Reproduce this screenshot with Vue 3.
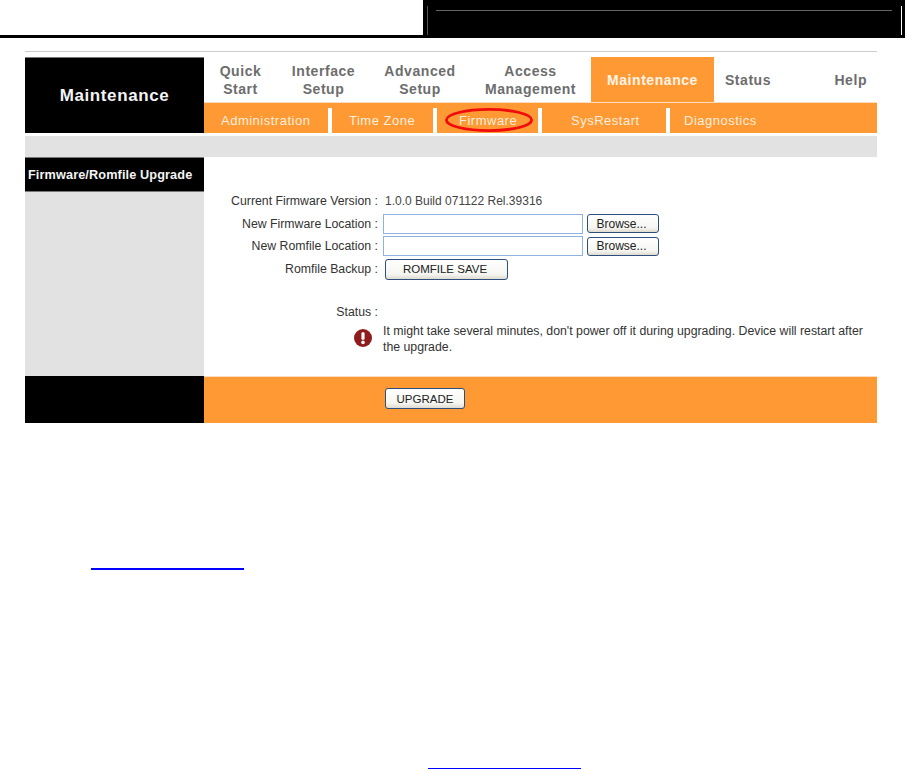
<script setup>
const tabs = [
  { lines: ['Quick', 'Start'], w: 73 },
  { lines: ['Interface', 'Setup'], w: 93 },
  { lines: ['Advanced', 'Setup'], w: 100 },
  { lines: ['Access', 'Management'], w: 121 },
  { lines: ['Maintenance'], w: 123, active: true },
  { lines: ['Status'], w: 68 },
  { lines: ['Help'], w: 95, right: true },
]
const subs = [
  { label: 'Administration', w: 128, pad: 17 },
  { label: 'Time Zone', w: 105, pad: 17 },
  { label: 'Firmware', w: 105, pad: 22 },
  { label: 'SysRestart', w: 128, pad: 29 },
  { label: 'Diagnostics', w: 207, pad: 14 },
]
</script>

<template>
  <div class="page">
    <header class="topbar">
      <div class="top-left"></div>
      <div class="top-right">
        <span class="top-rule"></span>
      </div>
    </header>

    <main class="router">
      <div class="head">
        <div class="brand">Maintenance</div>
        <div class="menus">
          <nav class="tabs">
            <div
              v-for="t in tabs"
              :key="t.lines[0]"
              class="tab"
              :class="{ active: t.active, right: t.right }"
              :style="{ width: t.w + 'px' }"
            >
              <span v-for="l in t.lines" :key="l">{{ l }}</span>
            </div>
          </nav>
          <nav class="subs">
            <div
              v-for="s in subs"
              :key="s.label"
              class="sub"
              :style="{ width: s.w + 'px', paddingLeft: s.pad + 'px' }"
            >{{ s.label }}</div>
            <svg class="ring" width="88" height="24" viewBox="0 0 88 24">
              <ellipse cx="44" cy="12" rx="42.6" ry="10.6" fill="none" stroke="#f10c0c" stroke-width="2.8" />
            </svg>
          </nav>
        </div>
      </div>

      <div class="band"></div>

      <section class="body">
        <aside class="side">
          <h2 class="side-title">Firmware/Romfile Upgrade</h2>
        </aside>
        <div class="content">
          <div class="row first">
            <span class="label">Current Firmware Version :</span>
            <span class="value">1.0.0 Build 071122 Rel.39316</span>
          </div>
          <div class="row">
            <span class="label">New Firmware Location :</span>
            <input class="file" type="text" />
            <button class="btn browse" type="button">Browse...</button>
          </div>
          <div class="row">
            <span class="label">New Romfile Location :</span>
            <input class="file" type="text" />
            <button class="btn browse" type="button">Browse...</button>
          </div>
          <div class="row">
            <span class="label">Romfile Backup :</span>
            <button class="btn save" type="button">ROMFILE SAVE</button>
          </div>
          <div class="row status">
            <span class="label">Status :</span>
          </div>
          <div class="notice">
            <svg class="alert" width="20" height="20" viewBox="0 0 20 20">
              <circle cx="10" cy="10" r="9" fill="#8e1c1c" />
              <rect x="8.4" y="4.2" width="3.2" height="7.6" rx="1.2" fill="#fff" />
              <circle cx="10" cy="14.4" r="1.8" fill="#fff" />
            </svg>
            <p class="notice-text">It might take several minutes, don't power off it during upgrading. Device will restart after the upgrade.</p>
          </div>
        </div>
      </section>

      <footer class="foot">
        <div class="foot-side"></div>
        <div class="foot-main">
          <button class="btn upgrade" type="button">UPGRADE</button>
        </div>
      </footer>
    </main>

    <div class="link-line one"></div>
    <div class="link-line two"></div>
  </div>
</template>

<style>
html, body { margin: 0; background: #fff; }
</style>

<style scoped>
.page {
  width: 905px;
  height: 769px;
  overflow: hidden;
  font-family: "Liberation Sans", Arial, sans-serif;
  background: #fff;
}
.topbar { display: flex; height: 38px; }
.top-left { width: 423px; height: 35px; border-bottom: 3px solid #000; }
.top-right {
  flex: 1;
  background: #000;
  position: relative;
}
.top-right::before {
  content: "";
  position: absolute;
  left: 4px;
  top: 6px;
  width: 1px;
  height: 29px;
  background: #555;
}
.top-right::after {
  content: "";
  position: absolute;
  right: 3px;
  top: 6px;
  width: 1px;
  height: 29px;
  background: #fff;
}
.top-rule {
  position: absolute;
  left: 13px;
  right: 13px;
  top: 10px;
  height: 1px;
  background: #666;
}
.router {
  width: 852px;
  margin: 13px 0 0 25px;
  border-top: 1px solid #ccc;
  padding-top: 5px;
}
.head { display: flex; height: 76px; }
.brand {
  box-sizing: border-box;
  width: 179px;
  background: #000;
  border-top: 1px solid #777;
  color: #f4f4f4;
  font-size: 17px;
  font-weight: bold;
  letter-spacing: 0.6px;
  text-align: center;
  line-height: 75px;
}
.menus { flex: 1; display: flex; flex-direction: column; }
.tabs { display: flex; height: 46px; border-bottom: 1px solid #fbdcc0; box-sizing: border-box; }
.tab {
  box-sizing: border-box;
  display: flex;
  flex-direction: column;
  justify-content: center;
  align-items: center;
  padding-top: 1px;
  color: #6d6d6d;
  font-size: 14px;
  font-weight: bold;
  line-height: 18px;
  letter-spacing: 0.55px;
}
.tab.active { background: #ff9933; color: #fff4e8; }
.tab.right { align-items: flex-end; padding-right: 10px; }
.subs {
  position: relative;
  display: flex;
  height: 30px;
  background: #ff9933;
}
.sub {
  position: relative;
  box-sizing: border-box;
  color: #ffeedd;
  font-size: 13px;
  letter-spacing: 0.5px;
  line-height: 35px;
}
.sub::after {
  content: "";
  position: absolute;
  right: 0;
  top: 5px;
  bottom: 0;
  width: 4px;
  background: #fff;
}
.sub:last-of-type::after { display: none; }
.ring { position: absolute; left: 241px; top: 5px; }
.band { height: 21px; margin-top: 3px; background: #e2e2e2; }
.body { display: flex; height: 219px; }
.side { width: 179px; background: #e2e2e2; }
.side-title {
  box-sizing: border-box;
  margin: 0;
  height: 35px;
  background: #000;
  border-top: 1px solid #777;
  border-bottom: 1px solid #777;
  color: #f4f4f4;
  font-size: 12.7px;
  font-weight: bold;
  line-height: 34px;
  padding-left: 3px;
  letter-spacing: 0.12px;
  white-space: nowrap;
}
.content {
  flex: 1;
  padding-top: 33px;
  color: #333;
  font-size: 12.3px;
}
.row { display: flex; align-items: center; height: 22.6px; }
.label {
  width: 174px;
  text-align: right;
  flex: none;
  white-space: nowrap;
}
.value { margin-left: 7px; color: #444; font-size: 12px; }
.file {
  box-sizing: border-box;
  width: 200px;
  height: 20px;
  margin: 0 4px 0 5px;
  padding: 0;
  border: 1px solid #8fb3dc;
  background: #fff;
}
.btn {
  font: 12px "Liberation Sans", Arial, sans-serif;
  color: #222;
  background: linear-gradient(#ffffff, #f5f5f1 75%, #dedbd0);
  border: 1px solid #2c4f7f;
  border-radius: 3px;
  padding: 0;
}
.browse { width: 72px; height: 19px; padding-right: 3px; }
.save { width: 123px; height: 21px; margin-left: 7px; padding-right: 3px; font-size: 11.5px; }
.row.status { margin-top: 20px; }
.notice { display: flex; }
.alert { margin: 5px 0 0 149px; flex: none; }
.notice-text {
  margin: 0 0 0 10px;
  width: 486px;
  font-size: 12.3px;
  line-height: 16px;
  color: #333;
}
.foot { display: flex; height: 47px; }
.foot-side { width: 179px; background: #000; }
.foot-main {
  flex: 1;
  background: #ff9933;
  border-top: 1px solid #fbdcc0;
  box-sizing: border-box;
  padding: 11px 0 0 181px;
}
.upgrade { display: block; width: 80px; height: 21px; font-size: 11.5px; }
.link-line { background: #0000ff; }
.link-line.one { width: 153px; height: 2px; margin: 145px 0 0 91px; }
.link-line.two { width: 153px; height: 1px; margin: 198px 0 0 428px; }
</style>
